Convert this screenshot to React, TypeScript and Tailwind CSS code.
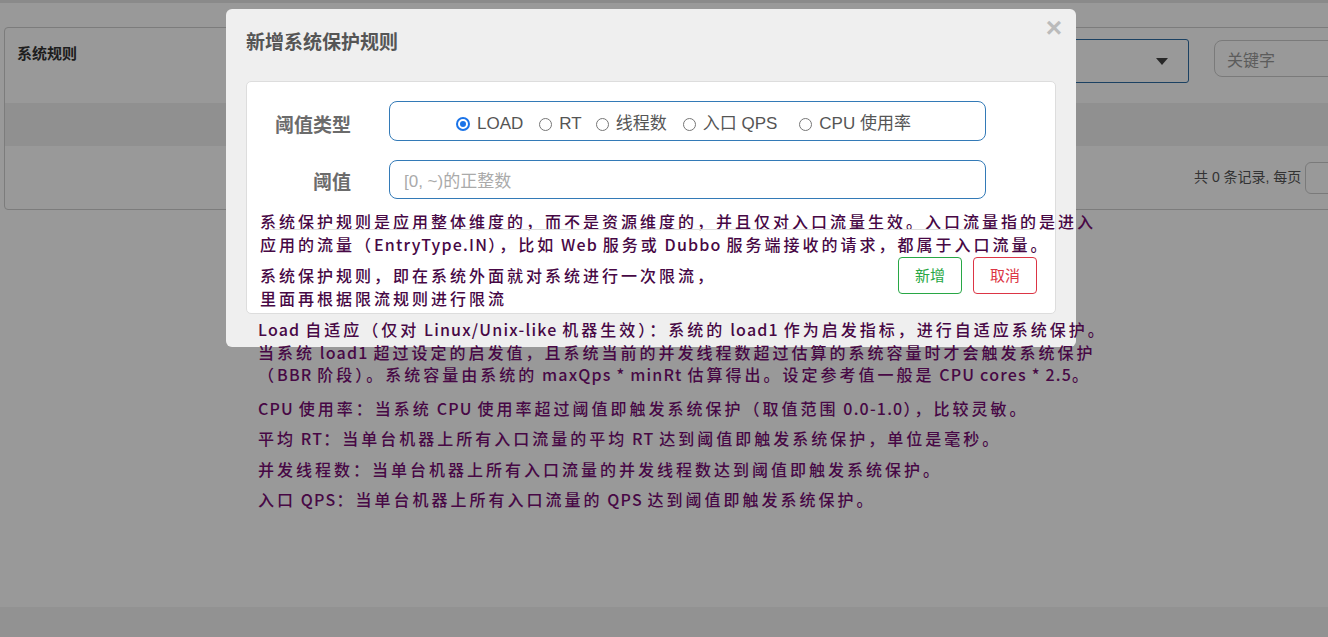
import React from 'react';

const cjk = { fontFamily: '"Noto Sans CJK SC", "Noto Sans", sans-serif' };
const ui = { fontFamily: '"Liberation Sans", "Noto Sans CJK SC", sans-serif' };

// CJK runs get wide spacing, latin runs tighter, like the reference
const Spaced: React.FC<{ children: string; className?: string }> = ({ children, className = '' }) => {
  const parts = children.match(/[\u3000-\u9fff\uff00-\uffef]+|[^\u3000-\u9fff\uff00-\uffef]+/g) || [];
  return (
    <div className={`text-[16px] leading-[22.5px] font-medium text-[#470845] whitespace-nowrap ${className}`}>
      {parts.map((p, i) =>
        /[\u3000-\u9fff\uff00-\uffef]/.test(p) ? (
          <span key={i} className="tracking-[3px]">{p}</span>
        ) : (
          <span key={i} className="tracking-[1.2px]">{p}</span>
        )
      )}
    </div>
  );
};

const Radio: React.FC<{ checked?: boolean; label: string; gap?: string }> = ({ checked, label, gap = 'mr-[14px]' }) => (
  <label className={`flex items-center gap-[7px] ${gap}`}>
    {checked ? (
      <span className="w-[14px] h-[14px] rounded-full bg-[#1a73e8] flex items-center justify-center">
        <span className="w-[10px] h-[10px] rounded-full border-2 border-white bg-[#1a73e8]" />
      </span>
    ) : (
      <span className="w-[13px] h-[13px] rounded-full border border-[#767676] bg-white" />
    )}
    <span className="text-[17px] text-[#555]">{label}</span>
  </label>
);

const Background: React.FC = () => (
  <div className="w-[1328px] h-[637px] bg-white flex flex-col" style={cjk}>
    <div className="h-[3px] shrink-0 bg-[#e6e6e6]" />
    <div className="mt-[24px] ml-[4px] w-[1360px] h-[183px] shrink-0 border border-[#cfcfcf] rounded-[4px] flex flex-col">
      <div className="h-[75px] flex items-start">
        <div className="w-[991px] shrink-0 pl-[12px] pt-[14px] text-[15px] font-bold text-[#333]">系统规则</div>
        <div className="mt-[11px] w-[193px] shrink-0 h-[44px] border border-[#2e6da4] rounded-[3px] flex items-center justify-end pr-[20px]">
          <span className="w-0 h-0 border-l-[6px] border-r-[6px] border-t-[7px] border-l-transparent border-r-transparent border-t-[#444]" />
        </div>
        <div className="ml-[25px] mt-[12px] w-[140px] shrink-0 h-[37px] border border-[#ccc] rounded-l-[8px] flex items-center pl-[12px] text-[16px] text-[#999]">关键字</div>
      </div>
      <div className="h-[43px] bg-[#f0f0f0]" />
      <div className="flex-1 flex items-center">
        <span className="ml-[1189px] shrink-0 whitespace-nowrap text-[14px] text-[#555] mr-[4px]" style={ui}>共 0 条记录, 每页</span>
        <span className="w-[40px] shrink-0 h-[32px] border border-[#ccc] rounded-l-[6px]" />
      </div>
    </div>
    <div className="flex-1" />
    <div className="h-[30px] shrink-0 bg-[#f4f4f4]" />
  </div>
);

export default function App() {
  return (
    <div className="relative w-[1328px] h-[637px] overflow-hidden">
      <Background />
      <div className="absolute inset-0 bg-black/40" />
      <div className="absolute left-[226px] top-[9px] w-[850px] h-[338px] bg-[#efefef] rounded-[6px] flex flex-col" style={cjk}>
        <div className="h-[72px] shrink-0 flex items-start">
          <div className="pl-[20px] pt-[18px] text-[19px] font-bold text-[#555]">新增系统保护规则</div>
          <div className="ml-auto mr-[14px] mt-[-1px] text-[28px] font-bold text-[#bbb] leading-[40px]" style={ui}>×</div>
        </div>
        <div className="ml-[20px] w-[810px] h-[233px] shrink-0 bg-white border border-[#ddd] rounded-[5px] pt-[19px] pl-[13px] pr-[18px] flex flex-col">
          <div className="flex items-center h-[40px] shrink-0">
            <div className="w-[91px] pt-[6px] text-right text-[19px] font-bold text-[#6b6b6b]">阈值类型</div>
            <div className="ml-[38px] w-[597px] h-[40px] border border-[#337ab7] rounded-[8px] flex items-center justify-center pt-[6px] pr-[8px]" style={ui}>
              <Radio checked label="LOAD" gap="mr-[16px]" />
              <Radio label="RT" />
              <Radio label="线程数" gap="mr-[16px]" />
              <Radio label="入口 QPS" gap="mr-[22px]" />
              <Radio label="CPU 使用率" gap="mr-0" />
            </div>
          </div>
          <div className="flex items-center h-[39px] mt-[19px] shrink-0">
            <div className="w-[91px] pt-[4px] text-right text-[19px] font-bold text-[#6b6b6b]">阈值</div>
            <div className="ml-[38px] w-[597px] h-[39px] border border-[#337ab7] rounded-[8px] flex items-center pt-[4px] pl-[14px] text-[17px] text-[#aaa]" style={ui}>
              [0, ~)的正整数
            </div>
          </div>
          <div className="relative mt-[11px] shrink-0">
            <Spaced>系统保护规则是应用整体维度的，而不是资源维度的，并且仅对入口流量生效。入口流量指的是进入</Spaced>
            <Spaced>应用的流量（EntryType.IN），比如 Web 服务或 Dubbo 服务端接收的请求，都属于入口流量。</Spaced>
            <div className="absolute left-[10px] top-[19px] w-[766px] border-t border-[#ddd]" />
          </div>
          <div className="flex items-start mt-[9px] shrink-0">
            <div>
              <Spaced>系统保护规则，即在系统外面就对系统进行一次限流，</Spaced>
              <Spaced>里面再根据限流规则进行限流</Spaced>
            </div>
            <div className="ml-auto flex gap-[11px] mt-[-7px]">
              <button className="w-[64px] h-[37px] border border-[#28a745] rounded-[4px] text-[15px] text-[#28a745] bg-white">新增</button>
              <button className="w-[64px] h-[37px] border border-[#dc3545] rounded-[4px] text-[15px] text-[#dc3545] bg-white">取消</button>
            </div>
          </div>
        </div>
        <div className="pl-[32px] pt-[4px] shrink-0">
          <Spaced>Load 自适应（仅对 Linux/Unix-like 机器生效）：系统的 load1 作为启发指标，进行自适应系统保护。</Spaced>
          <Spaced>当系统 load1 超过设定的启发值，且系统当前的并发线程数超过估算的系统容量时才会触发系统保护</Spaced>
          <Spaced>（BBR 阶段）。系统容量由系统的 maxQps * minRt 估算得出。设定参考值一般是 CPU cores * 2.5。</Spaced>
          <Spaced className="mt-[11px]">CPU 使用率：当系统 CPU 使用率超过阈值即触发系统保护（取值范围 0.0-1.0），比较灵敏。</Spaced>
          <Spaced className="mt-[8px]">平均 RT：当单台机器上所有入口流量的平均 RT 达到阈值即触发系统保护，单位是毫秒。</Spaced>
          <Spaced className="mt-[8px]">并发线程数：当单台机器上所有入口流量的并发线程数达到阈值即触发系统保护。</Spaced>
          <Spaced className="mt-[8px]">入口 QPS：当单台机器上所有入口流量的 QPS 达到阈值即触发系统保护。</Spaced>
        </div>
      </div>
    </div>
  );
}
